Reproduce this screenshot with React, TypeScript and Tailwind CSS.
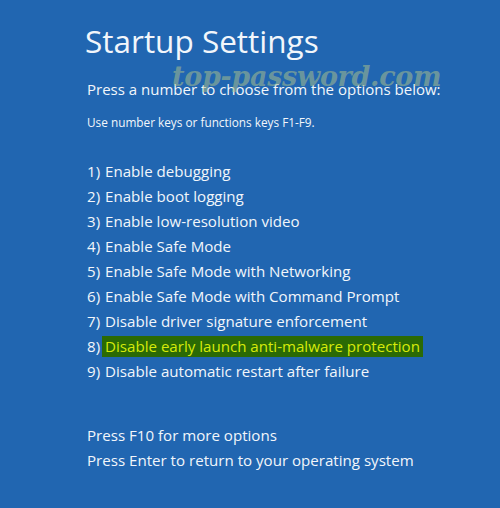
const options = [
  "Enable debugging",
  "Enable boot logging",
  "Enable low-resolution video",
  "Enable Safe Mode",
  "Enable Safe Mode with Networking",
  "Enable Safe Mode with Command Prompt",
  "Disable driver signature enforcement",
  "Disable early launch anti-malware protection",
  "Disable automatic restart after failure",
];

const App = () => {
  return (
    <div
      className="relative w-[500px] h-[508px] bg-[#2166b1] text-[#f2f6fb] pl-[85px] pt-[22px] overflow-hidden"
      style={{ fontFamily: '"Segoe UI", "Open Sans", sans-serif' }}
    >
      <h1 className="text-[31.5px] leading-[38px] font-normal">Startup Settings</h1>
      <p className="mt-[18px] text-[15px] leading-[22px] pl-[2px]">
        Press a number to choose from the options below:
      </p>
      <p className="mt-[13px] text-[11.8px] leading-[18px] pl-[2px]">
        Use number keys or functions keys F1-F9.
      </p>
      <ul className="mt-[28px] pl-[2px]">
        {options.map((text, i) => (
          <li key={i} className="text-[15.1px] leading-[25px] flex">
            <span>{i + 1})</span>
            {i === 7 ? (
              <span className="ml-[2px] px-[3px] bg-[#2b6a05] text-[#d7ea0a] leading-[21px] my-[2px]">
                {text}
              </span>
            ) : (
              <span className="ml-[5px]">{text}</span>
            )}
          </li>
        ))}
      </ul>
      <div className="mt-[39px] pl-[2px]">
        <p className="text-[15.1px] leading-[25px]">Press F10 for more options</p>
        <p className="text-[15.1px] leading-[25px]">
          Press Enter to return to your operating system
        </p>
      </div>
      <div
        className="absolute left-[172px] top-[57px] whitespace-nowrap text-[27px] italic font-bold text-[#a9bf8c]/55 tracking-[-0.3px]"
        style={{ fontFamily: '"DejaVu Serif", serif' }}
      >
        top-password.com
      </div>
    </div>
  );
};

export default App;
